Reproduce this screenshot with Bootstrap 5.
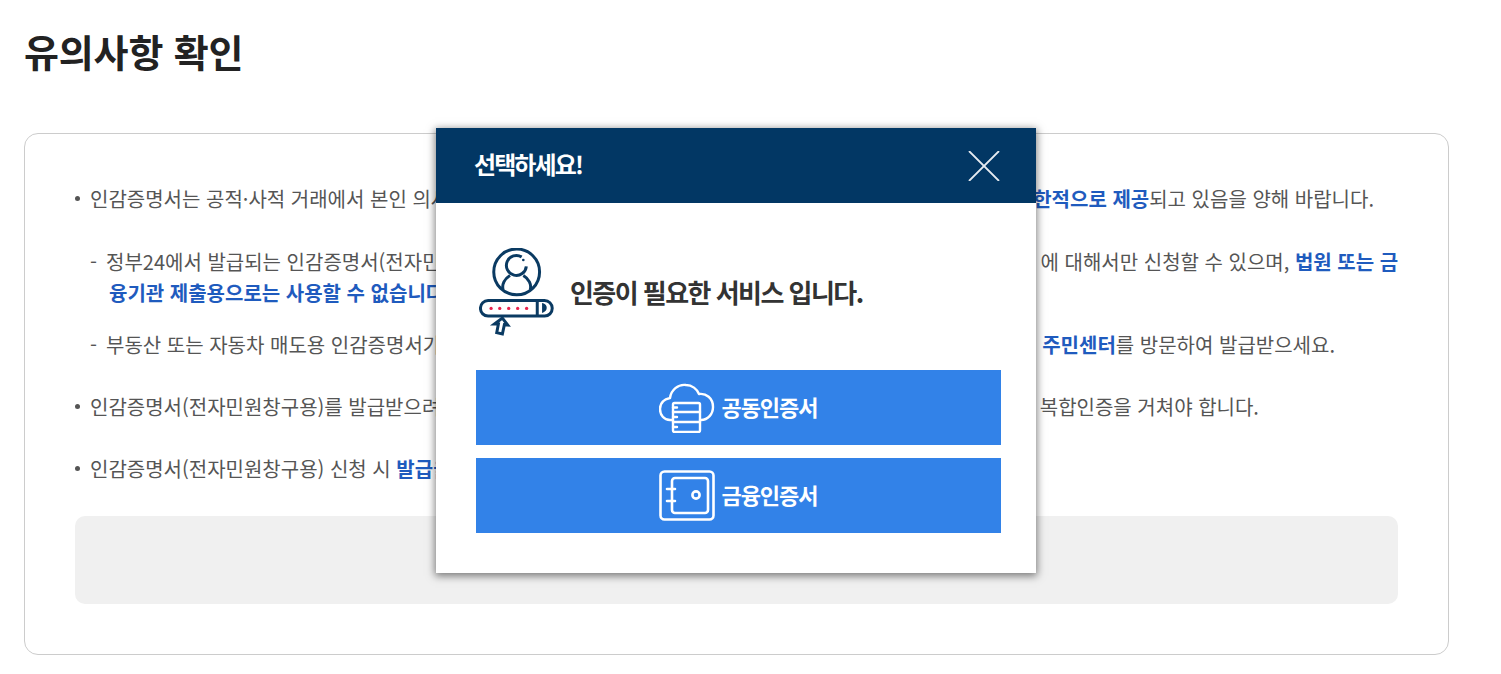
<!DOCTYPE html>
<html lang="ko">
<head>
<meta charset="utf-8">
<title>유의사항 확인</title>
<link rel="stylesheet" href="https://cdn.jsdelivr.net/npm/bootstrap@5.3.0/dist/css/bootstrap.min.css">
<style>
html,body{height:674px;overflow:hidden;background:#fff}
body{font-family:"Noto Sans CJK KR","Noto Sans",sans-serif;position:relative;color:#555}
.pg-title{font-size:38px;font-weight:700;color:#222;letter-spacing:-.15px;line-height:56px;margin:0;padding:23px 0 0 24px;height:133px}
.notice-box{margin-left:24px;width:1425px;height:522px;border:1px solid #ccc;border-radius:14px;padding:49px 50px 50px}
.notice-list{list-style:none;margin:0 0 32px;padding:0;font-size:20px;line-height:31px;white-space:nowrap}
.notice-list>li{position:relative;padding-left:15px;margin-bottom:31px}
.notice-list>li:last-child{margin-bottom:0}
.notice-list>li::before{content:"";position:absolute;left:0;top:13px;width:5px;height:5px;border-radius:50%;background:#555}
.sub-list{list-style:none;margin:0 0 21px;padding:0;line-height:31px;white-space:nowrap}
.sub-list>li{margin-bottom:21px}
.sub-list .cont{padding-left:19px;display:block}
.dash{display:inline-block;width:16px}
.hl{color:#1f5bbe;font-weight:700}
.sp1{display:inline-block;width:584px}
.sp2{display:inline-block;width:600px}
.sp3{display:inline-block;width:601px}
.sp4{display:inline-block;width:581px}
.grey-box{height:88px;background:#f0f0f0;border-radius:10px;width:1323px}
.pick-modal{position:absolute;left:436px;top:128px;width:600px;height:445px;border:0;border-radius:0;box-shadow:0 2px 8px 1px rgba(0,0,0,.5);background:#fff}
.pick-head{height:75px;background:#023764;color:#fff;padding:0 36px 0 38px;font-size:24px;font-weight:700;letter-spacing:-1.9px}
.pick-head span{margin-bottom:3px}
.pick-x{width:32px;height:30px;display:block;padding:0;border:0;background:none}
.pick-x svg{display:block}
.pick-body{padding:45px 35px 0 40px}
.pick-info{height:88px;padding-left:3px;gap:16px;margin-bottom:34px;font-size:26px;font-weight:700;color:#333;letter-spacing:-1.55px}
.pick-info span{margin-bottom:2px}
.pick-btn{height:75px;width:525px;background:#3282e8;color:#fff;border:0;border-radius:0;font-size:22px;font-weight:700;letter-spacing:-1px;gap:6px;margin-bottom:13px;padding:0}
.pick-btn span{margin-bottom:3px}
.pick-btn:hover{background:#3282e8;color:#fff}
</style>
</head>
<body>
<h1 class="pg-title">유의사항 확인</h1>
<div class="notice-box">
  <ul class="notice-list">
    <li>인감증명서는 공적·사적 거래에서 본인 의사<span class="sp1"></span><span class="hl">한적으로 제공</span>되고 있음을 양해 바랍니다.
      <ul class="sub-list mt-4 pt-2">
        <li><span class="dash">-</span>정부24에서 발급되는 인감증명서(전자민<span class="sp2"></span>에 대해서만 신청할 수 있으며, <span class="hl">법원 또는 금</span><span class="cont hl">융기관 제출용으로는 사용할 수 없습니다</span></li>
        <li><span class="dash">-</span>부동산 또는 자동차 매도용 인감증명서가<span class="sp3"></span><span class="hl">주민센터</span>를 방문하여 발급받으세요.</li>
      </ul>
    </li>
    <li>인감증명서(전자민원창구용)를 발급받으려면<span class="sp4"></span>복합인증을 거쳐야 합니다.</li>
    <li>인감증명서(전자민원창구용) 신청 시 <span class="hl">발급을</span></li>
  </ul>
  <div class="grey-box"></div>
</div>
<div class="modal-content pick-modal">
  <div class="pick-head d-flex align-items-center justify-content-between">
    <span>선택하세요!</span>
    <button type="button" class="pick-x" aria-label="닫기"><svg width="32" height="30" viewBox="0 0 32 30"><path d="M1 0L31 30M31 0L1 30" stroke="#e6ebf0" stroke-width="1.8" fill="none"/></svg></button>
  </div>
  <div class="pick-body">
    <div class="pick-info d-flex align-items-center">
      <svg width="75" height="88" viewBox="42 25 225 265" fill="none" stroke="#0a3a62" stroke-width="9">
        <circle cx="155" cy="97" r="69"/>
        <path d="M170 52A30 30 0 1 0 184 80"/>
        <circle cx="175" cy="61" r="4" fill="#0a3a62" stroke="none"/>
        <path d="M135 108C118 118 110 135 114 150M175 108C192 118 200 135 196 150"/>
        <rect x="46" y="183" width="216" height="47" rx="23"/>
        <path d="M217 183V229"/>
        <path d="M234 194C246 198 246 212 234 217Z" fill="#0a3a62" stroke-width="5"/>
        <g fill="#e8224e" stroke="none"><circle cx="78" cy="207" r="5"/><circle cx="104" cy="207" r="5"/><circle cx="131" cy="207" r="5"/><circle cx="158" cy="207" r="5"/><circle cx="185" cy="207" r="5"/></g>
        <path d="M112 236L128 257L118 256L112 284L95 280L100 254L88 254Z" fill="#fff"/>
      </svg>
      <span>인증이 필요한 서비스 입니다.</span>
    </div>
    <button type="button" class="btn pick-btn d-flex align-items-center justify-content-center">
      <svg width="56" height="50" viewBox="0 0 56 50" fill="none" stroke="#fff" stroke-width="2.4" stroke-linejoin="round" stroke-linecap="round">
        <path d="M13 37H11C5 37 1 32 1 26C1 20 5 16 11 15C12 7 19 1 27 2C33 2 38 6 40 11C47 10 54 15 54 24C54 31 49 37 42 37H41"/>
        <rect x="14" y="20" width="27" height="29" rx="1.5"/>
        <path d="M14 29H41M14 39H41M14 24.5H18M14 34H18M14 44H18"/>
      </svg>
      <span>공동인증서</span>
    </button>
    <button type="button" class="btn pick-btn d-flex align-items-center justify-content-center">
      <svg width="56" height="51" viewBox="0 0 56 51" fill="none" stroke="#fff" stroke-width="2.6" stroke-linejoin="round" stroke-linecap="round">
        <rect x="1.5" y="1.5" width="53" height="48" rx="4"/>
        <rect x="13" y="8" width="36" height="35" rx="3"/>
        <circle cx="37" cy="25" r="3.6"/>
        <path d="M8 19H16M8 31H16"/>
      </svg>
      <span>금융인증서</span>
    </button>
  </div>
</div>
<script src="https://cdn.jsdelivr.net/npm/bootstrap@5.3.0/dist/js/bootstrap.bundle.min.js"></script>
</body>
</html>
